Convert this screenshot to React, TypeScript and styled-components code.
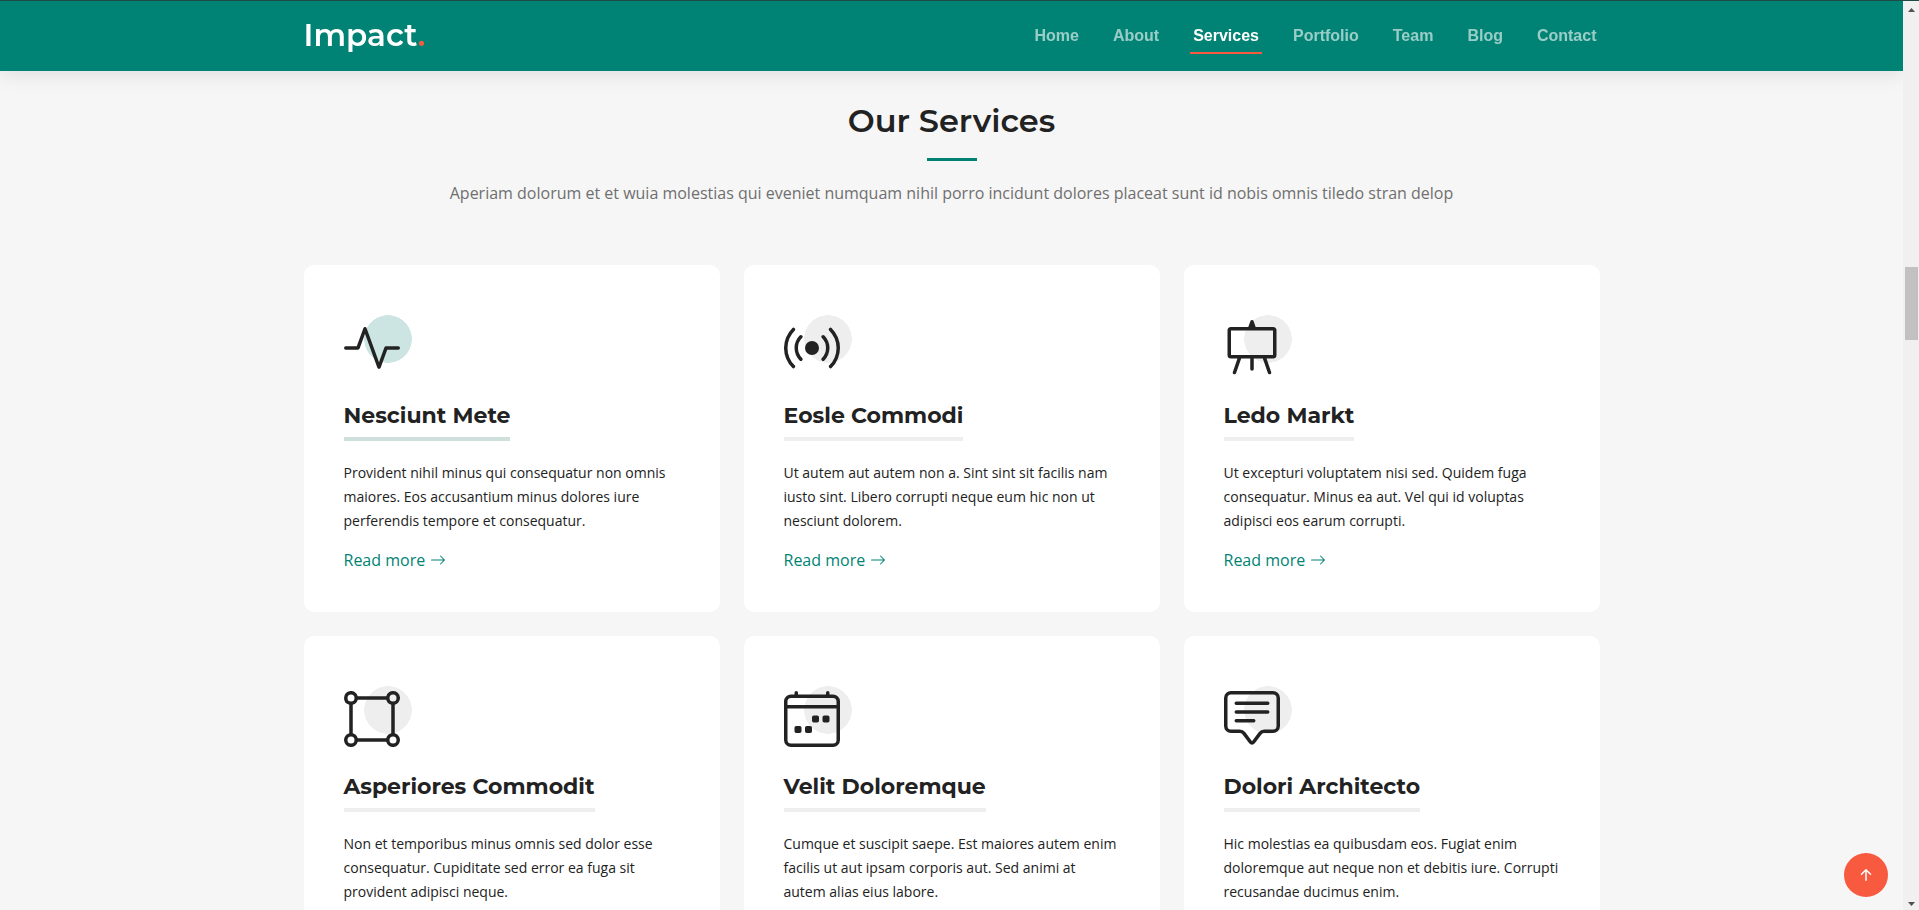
import React from "react";
import styled, { createGlobalStyle } from "styled-components";
import type { IconType } from "react-icons";
import {
  BsActivity,
  BsArrowRight,
  BsArrowUpShort,
  BsBoundingBoxCircles,
  BsBroadcast,
  BsCalendar4Week,
  BsChatSquareText,
  BsEasel,
} from "react-icons/bs";

const color = {
  primary: "#008374",
  accent: "#f85a40",
  ink: "#222222",
  page: "#f6f6f6",
};

const headingFont = `Montserrat, Inter, "Open Sans", sans-serif`;
const bodyFont = `"Open Sans", "Noto Sans", sans-serif`;
const navFont = `"Liberation Sans", Arial, sans-serif`;

const GlobalStyle = createGlobalStyle`
  *, *::before, *::after { box-sizing: border-box; }
  body {
    margin: 0;
    background: ${color.page};
    color: ${color.ink};
    font-family: ${bodyFont};
  }
  a { text-decoration: none; }
`;

const Shell = styled.div`
  display: grid;
  grid-template-columns: minmax(0, 1fr) 16px;
  height: 100vh;
  position: relative;
  overflow: hidden;
  border-top: 1px solid #1f4b46;
`;

const Page = styled.div`
  height: 100%;
  min-height: 0;
  overflow-y: auto;
  scrollbar-width: none;
`;

const Container = styled.div`
  width: 100%;
  max-width: 1320px;
  margin: 0 auto;
  padding: 0 12px;
`;

const Header = styled.header`
  position: sticky;
  top: 0;
  z-index: 10;
  background: ${color.primary};
  box-shadow: 0 3px 20px rgba(0, 0, 0, 0.1);
`;

const HeaderRow = styled(Container)`
  display: flex;
  align-items: center;
  justify-content: space-between;
  height: 70px;
`;

const Logo = styled.a`
  padding-bottom: 2px;
  color: #ffffff;
  font: 600 31px/36px ${headingFont};

  span {
    color: ${color.accent};
  }
`;

const NavList = styled.ul`
  display: flex;
  gap: 28px;
  margin: 0;
  padding: 0;
  list-style: none;
`;

const NavLink = styled.a<{ $active?: boolean }>`
  display: block;
  position: relative;
  padding: 0 3px;
  font: 700 16px/24px ${navFont};
  color: ${({ $active }) => ($active ? "#ffffff" : "rgba(255, 255, 255, 0.6)")};

  &::after {
    content: "";
    position: absolute;
    left: 0;
    bottom: -6px;
    width: 100%;
    height: 2px;
    background: ${({ $active }) => ($active ? color.accent : "transparent")};
  }
`;

const Section = styled.section`
  padding: 31px 0 60px;
`;

const SectionHeader = styled.div`
  display: flex;
  flex-direction: column;
  align-items: center;
  padding-bottom: 60px;
  text-align: center;
`;

const SectionTitle = styled.h2`
  margin: 0;
  font: 600 32px/38px ${headingFont};

  &::after {
    content: "";
    display: block;
    width: 50px;
    height: 3px;
    margin: 18px auto 0;
    background: ${color.primary};
  }
`;

const SectionLead = styled.p`
  margin: 20px 0 0;
  color: #6f6f6f;
  font-size: 16px;
  line-height: 24px;
`;

const CardGrid = styled.div`
  display: grid;
  grid-template-columns: repeat(auto-fit, minmax(320px, 1fr));
  gap: 24px;
`;

const Card = styled.article`
  padding: 50px 40px 40px;
  border-radius: 10px;
  background: #ffffff;
`;

const IconBadge = styled.div<{ $active?: boolean }>`
  display: flex;
  width: 68px;
  padding-top: 5px;
  background: radial-gradient(
      circle closest-side,
      ${({ $active }) => ($active ? "#cce5e2" : "#eeeeee")} 98%,
      transparent
    )
    right top / 48px 48px no-repeat;
`;

const CardTitle = styled.h3<{ $active?: boolean }>`
  width: fit-content;
  margin: 26px 0 20px;
  padding-bottom: 8px;
  border-bottom: 4px solid ${({ $active }) => ($active ? "#cfdfdc" : "#eeeeee")};
  font: 700 22px/27px ${headingFont};
`;

const CardText = styled.p`
  margin: 0;
  font-size: 14px;
  line-height: 24px;
`;

const ReadMore = styled.a`
  display: inline-flex;
  align-items: center;
  gap: 5px;
  margin-top: 15px;
  color: ${color.primary};
  font-size: 16px;
  line-height: 24px;
`;

const BackToTop = styled.button`
  position: absolute;
  right: 31px;
  bottom: 13px;
  z-index: 20;
  display: flex;
  align-items: center;
  justify-content: center;
  width: 44px;
  height: 44px;
  padding: 0;
  border: 0;
  border-radius: 50%;
  background: ${color.accent};
  color: #ffffff;
  cursor: pointer;
`;

const ScrollTrack = styled.div`
  display: flex;
  flex-direction: column;
  align-items: center;
  padding: 7px 0 4px;
  background: #f0f0f0;
`;

const ScrollArrow = styled.svg`
  display: block;
  width: 7px;
  height: 4px;
  fill: #505050;
`;

const ScrollRail = styled.div`
  display: grid;
  grid-template-rows: 255fr 73fr 563fr;
  flex: 1;
  width: 13px;
`;

const ScrollThumb = styled.div`
  grid-row: 2;
  background: #c1c1c1;
`;

const navItems = ["Home", "About", "Services", "Portfolio", "Team", "Blog", "Contact"];

interface Service {
  icon: IconType;
  title: string;
  text: string;
  active?: boolean;
}

const services: Service[] = [
  {
    icon: BsActivity,
    title: "Nesciunt Mete",
    text: "Provident nihil minus qui consequatur non omnis maiores. Eos accusantium minus dolores iure perferendis tempore et consequatur.",
    active: true,
  },
  {
    icon: BsBroadcast,
    title: "Eosle Commodi",
    text: "Ut autem aut autem non a. Sint sint sit facilis nam iusto sint. Libero corrupti neque eum hic non ut nesciunt dolorem.",
  },
  {
    icon: BsEasel,
    title: "Ledo Markt",
    text: "Ut excepturi voluptatem nisi sed. Quidem fuga consequatur. Minus ea aut. Vel qui id voluptas adipisci eos earum corrupti.",
  },
  {
    icon: BsBoundingBoxCircles,
    title: "Asperiores Commodit",
    text: "Non et temporibus minus omnis sed dolor esse consequatur. Cupiditate sed error ea fuga sit provident adipisci neque.",
  },
  {
    icon: BsCalendar4Week,
    title: "Velit Doloremque",
    text: "Cumque et suscipit saepe. Est maiores autem enim facilis ut aut ipsam corporis aut. Sed animi at autem alias eius labore.",
  },
  {
    icon: BsChatSquareText,
    title: "Dolori Architecto",
    text: "Hic molestias ea quibusdam eos. Fugiat enim doloremque aut neque non et debitis iure. Corrupti recusandae ducimus enim.",
  },
];

function ServiceCard({ icon: Icon, title, text, active }: Service) {
  return (
    <Card>
      <IconBadge $active={active}>
        <Icon size={56} aria-hidden />
      </IconBadge>
      <CardTitle $active={active}>{title}</CardTitle>
      <CardText>{text}</CardText>
      <ReadMore href="#services">
        Read more <BsArrowRight size={16} aria-hidden />
      </ReadMore>
    </Card>
  );
}

export default function App() {
  const pageRef = React.useRef<HTMLDivElement>(null);

  return (
    <>
      <GlobalStyle />
      <Shell>
        <Page ref={pageRef}>
          <Header>
            <HeaderRow>
              <Logo href="#home">
                Impact<span>.</span>
              </Logo>
              <nav aria-label="Main">
                <NavList>
                  {navItems.map((item) => (
                    <li key={item}>
                      <NavLink
                        href={`#${item.toLowerCase()}`}
                        $active={item === "Services"}
                        aria-current={item === "Services" ? "true" : undefined}
                      >
                        {item}
                      </NavLink>
                    </li>
                  ))}
                </NavList>
              </nav>
            </HeaderRow>
          </Header>
          <main>
            <Section id="services">
              <Container>
                <SectionHeader>
                  <SectionTitle>Our Services</SectionTitle>
                  <SectionLead>
                    Aperiam dolorum et et wuia molestias qui eveniet numquam nihil porro incidunt
                    dolores placeat sunt id nobis omnis tiledo stran delop
                  </SectionLead>
                </SectionHeader>
                <CardGrid>
                  {services.map((service) => (
                    <ServiceCard key={service.title} {...service} />
                  ))}
                </CardGrid>
              </Container>
            </Section>
          </main>
        </Page>
        <ScrollTrack aria-hidden>
          <ScrollArrow viewBox="0 0 7 4">
            <path d="M3.5 0 7 4H0z" />
          </ScrollArrow>
          <ScrollRail>
            <ScrollThumb />
          </ScrollRail>
          <ScrollArrow viewBox="0 0 7 4">
            <path d="M0 0h7L3.5 4z" />
          </ScrollArrow>
        </ScrollTrack>
        <BackToTop
          type="button"
          aria-label="Back to top"
          onClick={() => pageRef.current?.scrollTo({ top: 0, behavior: "smooth" })}
        >
          <BsArrowUpShort size={24} aria-hidden />
        </BackToTop>
      </Shell>
    </>
  );
}
